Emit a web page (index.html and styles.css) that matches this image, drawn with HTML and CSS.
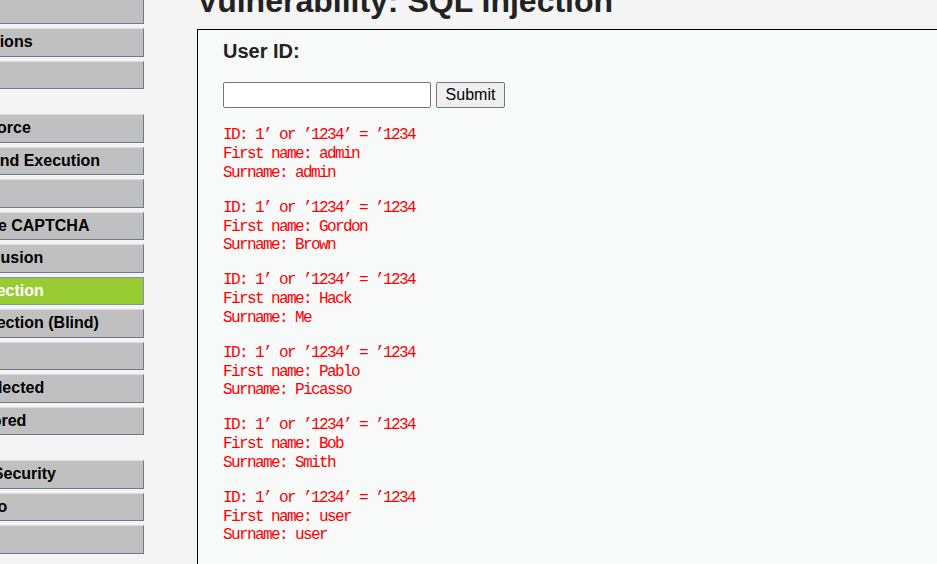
FILE: index.html
```html
<!DOCTYPE html>
<html>
<head>
<meta charset="utf-8">
<title>DVWA - SQL Injection</title>
<link rel="stylesheet" href="styles.css">
</head>
<body>
<div class="page">
  <div class="menu">
    <ul class="group">
      <li><a href="#">Home</a></li>
      <li><a href="#">Instructions</a></li>
      <li><a href="#">Setup</a></li>
    </ul>
    <ul class="group">
      <li><a href="#">Brute Force</a></li>
      <li><a href="#">Command Execution</a></li>
      <li><a href="#">CSRF</a></li>
      <li><a href="#">Insecure CAPTCHA</a></li>
      <li><a href="#">File Inclusion</a></li>
      <li><a class="active" href="#">SQL Injection</a></li>
      <li><a href="#">SQL Injection (Blind)</a></li>
      <li><a href="#">Upload</a></li>
      <li><a href="#">XSS reflected</a></li>
      <li><a href="#">XSS stored</a></li>
    </ul>
    <ul class="group">
      <li><a href="#">DVWA Security</a></li>
      <li><a href="#">PHP Info</a></li>
      <li><a href="#">About</a></li>
    </ul>
    <ul class="group">
      <li><a href="#">Logout</a></li>
    </ul>
  </div>
  <div class="main">
    <h1 class="title">Vulnerability: SQL Injection</h1>
    <div class="code-area">
      <h3 class="label">User ID:</h3>
      <form class="form" action="#" method="GET">
        <input class="text-input" type="text" name="id">
        <input class="submit" type="submit" name="Submit" value="Submit">
      </form>
      <div class="results">
      <pre class="result">ID: 1’ or ’1234’ = ’1234
First name: admin
Surname: admin</pre>
      <pre class="result">ID: 1’ or ’1234’ = ’1234
First name: Gordon
Surname: Brown</pre>
      <pre class="result">ID: 1’ or ’1234’ = ’1234
First name: Hack
Surname: Me</pre>
      <pre class="result">ID: 1’ or ’1234’ = ’1234
First name: Pablo
Surname: Picasso</pre>
      <pre class="result">ID: 1’ or ’1234’ = ’1234
First name: Bob
Surname: Smith</pre>
      <pre class="result">ID: 1’ or ’1234’ = ’1234
First name: user
Surname: user</pre>
      </div>
    </div>
  </div>
</div>
</body>
</html>
```
FILE: styles.css
```css
html, body {
  margin: 0;
  padding: 0;
}
body {
  background: #f4f4f4;
  font-family: "Liberation Sans", Arial, sans-serif;
  color: #000;
  overflow: hidden;
  width: 937px;
  height: 564px;
}
.page {
  display: flex;
  align-items: flex-start;
  margin: -17px 0 0 -70px;
}
.menu {
  flex: none;
  width: 214px;
  padding-top: 12.5px;
}
.group {
  list-style: none;
  margin: 0 0 25px 0;
  padding: 0;
}
.group li a {
  display: block;
  padding: 4px 10px;
  margin-bottom: 4px;
  line-height: 18.5px;
  font-size: 16px;
  font-weight: bold;
  color: #000;
  text-decoration: none;
  white-space: nowrap;
  overflow: hidden;
  background: #c0c0c0;
  border: 1px solid;
  border-color: #dcdcdc #6e7a8c #6e7a8c #c8c8c8;
}
.group li a.active {
  background: #99cc33;
  color: #fff;
  border-color: #8094ad;
}
.main {
  flex: none;
  width: 820px;
  margin-left: 53px;
}
.title {
  margin: 0 0 9px 0;
  font-size: 32px;
  line-height: 37px;
  font-weight: bold;
  color: #222;
  white-space: nowrap;
}
.code-area {
  background: #f8f9f9;
  border: 1px solid #000;
  padding: 0 25px 40px 25px;
}
.label {
  margin: 10px 0 0 0;
  font-size: 20px;
  line-height: 23px;
  font-weight: bold;
  color: #222;
}
.form {
  display: flex;
  gap: 5px;
  margin: 19px 0 0 0;
  height: 26px;
}
.text-input {
  box-sizing: border-box;
  width: 208px;
  height: 26px;
  margin: 0;
  border: 1px solid #767676;
  border-radius: 2px;
  background: #fff;
  font-family: "Liberation Sans", Arial, sans-serif;
  font-size: 16px;
}
.submit {
  box-sizing: border-box;
  width: 69px;
  height: 26px;
  margin: 0;
  padding: 0;
  border: 1px solid #767676;
  border-radius: 2px;
  background: #efefef;
  color: #000;
  font-family: "Liberation Sans", Arial, sans-serif;
  font-size: 16px;
}
.results {
  padding-top: 2px;
}
.result {
  margin: 16.25px 0;
  font-family: "Liberation Mono", "Courier New", monospace;
  font-size: 16px;
  letter-spacing: -1.6px;
  line-height: 18.75px;
  color: #ff0000;
}
```
